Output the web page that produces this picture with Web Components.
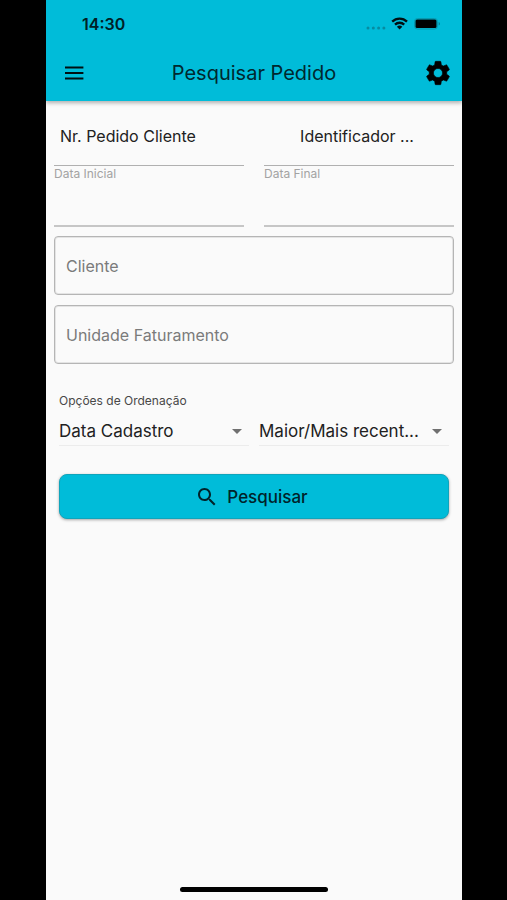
<!DOCTYPE html>
<html lang="pt-BR">
<head>
<meta charset="utf-8">
<meta name="viewport" content="width=device-width, initial-scale=1">
<title>Pesquisar Pedido</title>
<style>
  html, body { margin: 0; background: #000; }
  body { font-family: Inter, Roboto, "Liberation Sans", sans-serif; color: #212121; }
</style>
</head>
<body>
<phone-screen>
  <status-bar slot="top" time="14:30"></status-bar>
  <app-bar slot="top" heading="Pesquisar Pedido"></app-bar>
  <search-form></search-form>
</phone-screen>

<script>
  const define = (name, render) => customElements.define(name, class extends HTMLElement {
    connectedCallback() {
      if (this.shadowRoot) return;
      this.attachShadow({ mode: 'open' }).innerHTML =
        '<style>:host,*{box-sizing:border-box}</style>' + render(name => this.getAttribute(name) || '');
    }
  });

  define('phone-screen', () => `
    <style>
      :host { display: flex; flex-direction: column; min-height: 100vh; margin: 0 45px 0 46px; background: #fafafa; }
      header { background: #00bcd9; box-shadow: 0 2px 4px rgba(0,0,0,.3); clip-path: inset(0 0 -8px 0); }
      main { flex: 1; }
      .home { width: 148px; height: 5px; border-radius: 3px; background: #000; margin: 0 auto 8px; }
    </style>
    <header><slot name="top"></slot></header>
    <main><slot></slot></main>
    <div class="home"></div>`);

  define('status-bar', a => `
    <style>
      :host { display: flex; align-items: center; justify-content: space-between; height: 47px; padding: 0 22px 0 36px; color: #002026; }
      time { font-size: 16px; font-weight: 600; }
      svg { display: block; }
    </style>
    <time>${a('time')}</time>
    <svg width="76" height="16" viewBox="0 0 76 16" aria-hidden="true">
      <g fill="#078ba0"><circle cx="4" cy="12" r="1.5"/><circle cx="9.3" cy="12" r="1.5"/><circle cx="14.6" cy="12" r="1.5"/><circle cx="19.9" cy="12" r="1.5"/></g>
      <g fill="none" stroke="#000f12" stroke-width="2.3">
        <path d="M28.2 5.6a10.6 10.6 0 0 1 14.8 0"/><path d="M31 8.6a6.6 6.6 0 0 1 9.2 0"/>
      </g>
      <path d="M32.9 10.7a3.9 3.9 0 0 1 5.4 0l-2.7 2.7z" fill="#000f12"/>
      <rect x="50.5" y="2.5" width="23" height="10.5" rx="3" fill="none" stroke="#0898ae"/>
      <rect x="51.5" y="3.5" width="21" height="8.5" rx="1.5" fill="#000"/>
      <path d="M74.7 6q1.3.6 1.3 1.8t-1.3 1.8z" fill="#087f92"/>
    </svg>`);

  define('app-bar', a => `
    <style>
      :host { display: grid; grid-template-columns: 56px 1fr 48px; align-items: center; height: 54px; padding-bottom: 2px; color: #00282f; }
      h1 { margin: 0; padding-right: 8px; font-size: 20px; font-weight: 400; line-height: 24px; text-align: center; white-space: nowrap; }
      button { display: grid; place-items: center; width: 100%; height: 48px; padding: 0; border: 0; background: none; color: #000f12; }
    </style>
    <button type="button" aria-label="Menu"><svg width="24" height="24" viewBox="0 0 24 24" stroke="currentColor" stroke-width="2"><path d="M3 6.5h18.4M3 12h18.4M3 17.5h18.4"/></svg></button>
    <h1>${a('heading')}</h1>
    <button type="button" aria-label="Configurações"><svg width="28" height="28" viewBox="0 0 24 24" fill="#000"><path stroke="#000" stroke-width=".5" stroke-linejoin="round" d="M19.43 12.98c.04-.32.07-.64.07-.98s-.03-.66-.07-.98l2.11-1.65c.19-.15.24-.42.12-.64l-2-3.46c-.12-.22-.39-.3-.61-.22l-2.49 1c-.52-.4-1.08-.73-1.69-.98l-.38-2.65C14.46 2.18 14.25 2 14 2h-4c-.25 0-.46.18-.49.42l-.38 2.65c-.61.25-1.17.59-1.69.98l-2.49-1c-.23-.09-.49 0-.61.22l-2 3.46c-.13.22-.07.49.12.64l2.11 1.65c-.04.32-.07.65-.07.98s.03.66.07.98l-2.11 1.65c-.19.15-.24.42-.12.64l2 3.46c.12.22.39.3.61.22l2.49-1c.52.4 1.08.73 1.69.98l.38 2.65c.03.24.24.42.49.42h4c.25 0 .46-.18.49-.42l.38-2.65c.61-.25 1.17-.59 1.69-.98l2.49 1c.23.09.49 0 .61-.22l2-3.46c.12-.22.07-.49-.12-.64l-2.11-1.65zM12 15.9c-2.15 0-3.9-1.75-3.9-3.9s1.75-3.9 3.9-3.9 3.9 1.75 3.9 3.9-1.75 3.9-3.9 3.9z"/></svg></button>`);

  define('line-field', a => `
    <style>
      :host { display: block; min-width: 0; }
      input { display: block; width: 100%; height: 60px; padding: 0 6px; border: 0; border-bottom: 1px solid #b0b0b0; border-radius: 0; background: none; font: 16px/20px Inter, Roboto, sans-serif; color: #212121; outline: 0; }
      :host([align="center"]) input { text-align: center; padding: 0 8px 0 4px; }
      input::placeholder { color: #212121; opacity: 1; }
    </style>
    <input type="text" aria-label="${a('label')}" placeholder="${a('label')}">`);

  define('date-field', a => `
    <style>
      :host { display: block; min-width: 0; }
      label { display: block; font-size: 12px; line-height: 16px; color: #a3a3a3; }
      input { display: block; width: 100%; height: 45px; padding: 0; border: 0; border-bottom: 2px solid #c6c6c6; border-radius: 0; background: none; font: 16px/20px Inter, Roboto, sans-serif; outline: 0; }
    </style>
    <label for="d">${a('label')}</label><input id="d" type="text">`);

  define('outlined-field', a => `
    <style>
      :host { display: block; }
      input { display: block; width: 100%; height: 59px; padding: 0 11px; border: 1px solid #b5b5b5; border-radius: 4px; box-shadow: inset 0 0 0 1px #e4e4e4; background: none; font: 16px/20px Inter, Roboto, sans-serif; outline: 0; }
      input::placeholder { color: #7b7b7b; opacity: 1; }
    </style>
    <input type="text" aria-label="${a('label')}" placeholder="${a('label')}">`);

  define('sort-select', a => `
    <style>
      :host { display: grid; grid-template-columns: minmax(0, 1fr) 24px; align-items: center; border-bottom: 1px solid #ececec; min-width: 0; }
      select { grid-area: 1 / 1 / 2 / 3; width: 100%; height: 28px; padding: 0 24px 0 0; border: 0; background: none; appearance: none; font: 17px/24px Inter, Roboto, sans-serif; color: #212121; outline: 0; }
      svg { grid-area: 1 / 2; pointer-events: none; }
    </style>
    <select aria-label="${a('label')}"><option>${a('value')}</option></select>
    <svg width="24" height="24" viewBox="0 0 24 24" fill="#707070" aria-hidden="true"><path d="M7 10l5 5 5-5z"/></svg>`);

  define('search-button', () => `
    <style>
      :host { display: block; }
      button { display: flex; align-items: center; justify-content: center; gap: 8px; width: 100%; height: 45px; padding: 0 5px 0 0; border: 1px solid #10a4bb; border-radius: 8px; background: #00bcd9; box-shadow: 0 1px 3px rgba(0,0,0,.35); font: 500 17px/24px Inter, Roboto, sans-serif; color: #00232a; }
    </style>
    <button type="submit"><svg width="24" height="24" viewBox="0 0 24 24" fill="currentColor" aria-hidden="true"><path d="M15.5 14h-.79l-.28-.27C15.41 12.59 16 11.11 16 9.5 16 5.91 13.09 3 9.5 3S3 5.91 3 9.5 5.91 16 9.5 16c1.61 0 3.09-.59 4.23-1.57l.27.28v.79l5 4.99L20.49 19l-4.99-5zm-6 0C7.01 14 5 11.99 5 9.5S7.01 5 9.5 5 14 7.01 14 9.5 11.99 14 9.5 14z"/></svg><slot></slot></button>`);

  define('search-form', () => `
    <style>
      :host { display: block; padding: 5px 8px; }
      form { margin: 0; }
      .pair { display: grid; grid-template-columns: 1fr 1fr; column-gap: 20px; }
      .boxes { display: grid; gap: 10px; margin-top: 9px; }
      fieldset { margin: 28px 5px 0; padding: 0; border: 0; min-width: 0; }
      legend { padding: 0; font-size: 12px; line-height: 18px; color: #484848; }
      .sort { display: grid; grid-template-columns: 1fr 1fr; gap: 10px; margin-top: 7px; }
      search-button { margin: 28px 5px 0; }
    </style>
    <form onsubmit="return false">
      <div class="pair">
        <line-field label="Nr. Pedido Cliente"></line-field>
        <line-field label="Identificador ..." align="center"></line-field>
        <date-field label="Data Inicial"></date-field>
        <date-field label="Data Final"></date-field>
      </div>
      <div class="boxes">
        <outlined-field label="Cliente"></outlined-field>
        <outlined-field label="Unidade Faturamento"></outlined-field>
      </div>
      <fieldset>
        <legend>Opções de Ordenação</legend>
        <div class="sort">
          <sort-select label="Campo de ordenação" value="Data Cadastro"></sort-select>
          <sort-select label="Direção da ordenação" value="Maior/Mais recent..."></sort-select>
        </div>
      </fieldset>
      <search-button>Pesquisar</search-button>
    </form>`);
</script>
</body>
</html>
